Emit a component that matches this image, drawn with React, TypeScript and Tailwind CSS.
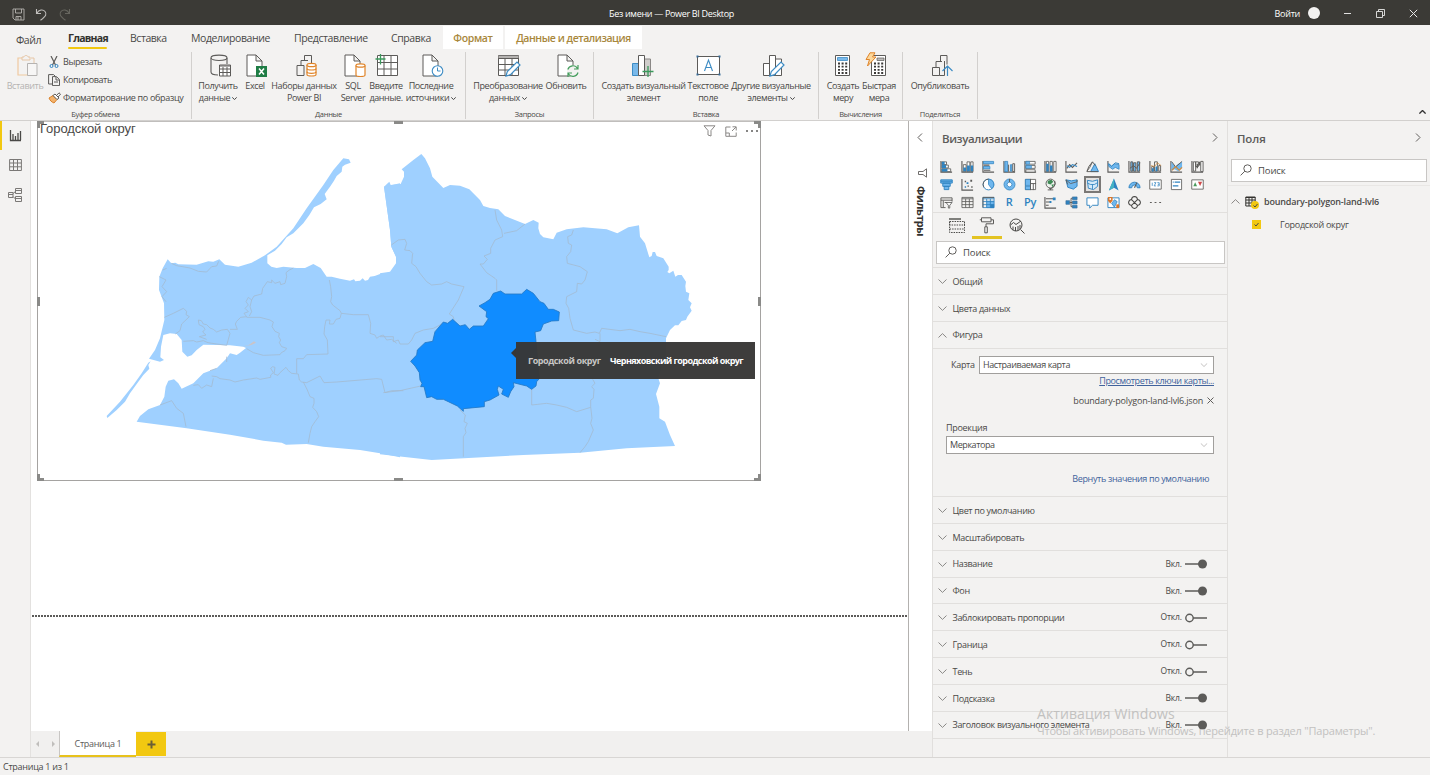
import React from "react";

type Kids = { children?: React.ReactNode };

const D = "#5c5b59";
const B = "#2f83c0";
const L = "#6fb7ee";

function Ico({ w = 24, h = 24, vb, className = "", children }: Kids & { w?: number; h?: number; vb?: string; className?: string }) {
  return (
    <svg width={w} height={h} viewBox={vb ?? `0 0 ${w} ${h}`} fill="none" className={`shrink-0 ${className}`}>
      {children}
    </svg>
  );
}

function Chevron({ up = false, w = 9, h = 5, color = "#8a8886", sw = 1 }: { up?: boolean; w?: number; h?: number; color?: string; sw?: number }) {
  return (
    <Ico w={w} h={h} vb="0 0 9 5">
      <path d={up ? "M.5 4.5L4.5.6l4 3.9" : "M.5.5l4 3.9 4-3.9"} stroke={color} strokeWidth={sw} />
    </Ico>
  );
}

/* ---------- Title bar ---------- */

function TitleBar() {
  return (
    <header className="relative flex h-[25px] shrink-0 items-center bg-[#3b3a36] text-white">
      <div className="flex items-center gap-[10px] pt-[3px] pl-[12px]">
        <Ico w={13} h={13}>
          <path d="M1 1h11v11H3L1 10zM3.500 1v4h6V1M4 12V8.500h5V12M6 9v3" stroke="#b5b3b0" strokeWidth=".9" />
        </Ico>
        <Ico w={13} h={13}>
          <path d="M1.500 1v4.500H6M1.800 5.200C4 1.500 8 1 10 3.500s1.200 4.500-4.500 8.800" stroke="#c0bebc" strokeWidth="1.100" />
        </Ico>
        <Ico w={13} h={13}>
          <path d="M11.500 1v4.500H7M11.200 5.200C9 1.500 5 1 3 3.500s-1.200 4.500 4.500 8.800" stroke="#67665f" strokeWidth="1.100" />
        </Ico>
      </div>
      <div className="ml-[538px] pt-[2px] text-[9px] tracking-[-0.32px] whitespace-nowrap">Без имени — Power BI Desktop</div>
      <div className="ml-auto flex items-center pt-px pr-[12px] text-[9px]">
        <span className="pt-px tracking-[-0.3px]">Войти</span>
        <span className="ml-[8px] h-[12px] w-[12px] rounded-full bg-[#f3f2f1]" />
        <Ico w={9} h={9} className="ml-[23px]">
          <path d="M1 4.500h7" stroke="#e0e0e0" />
        </Ico>
        <Ico w={9} h={9} className="ml-[24px]">
          <path d="M.5 2.500h6v6h-6zM2.500 2.500v-2h6v6h-2" stroke="#e8e8e8" strokeWidth=".9" />
        </Ico>
        <Ico w={9} h={9} className="ml-[24px]">
          <path d="M.8.8l7.400 7.400M8.200.8L.8 8.200" stroke="#e8e8e8" />
        </Ico>
      </div>
    </header>
  );
}

/* ---------- Ribbon ---------- */

function RibbonTabs() {
  return (
    <nav className="flex h-[23px] text-[10.5px] leading-[24px] whitespace-nowrap text-[#4a4947]">
      <span className="w-[68px] pt-[2px] pl-[16px] tracking-[-0.5px]">Файл</span>
      <span className="relative w-[62px] font-bold tracking-[-0.75px] text-[#33322f]">
        Главная
        <i className="absolute bottom-0 left-0 h-[2px] w-[39px] rounded bg-[#f2c811]" />
      </span>
      <span className="w-[61px] tracking-[-0.45px]">Вставка</span>
      <span className="w-[103px] tracking-[-0.4px]">Моделирование</span>
      <span className="w-[97px] tracking-[-0.4px]">Представление</span>
      <span className="w-[52px] tracking-[-0.4px]">Справка</span>
      <span className="mr-[2px] w-[60px] bg-white text-center font-semibold tracking-[-0.35px] text-[#a8873c]">Формат</span>
      <span className="w-[137px] bg-white text-center font-semibold tracking-[-0.45px] text-[#a8873c]">Данные и детализация</span>
    </nav>
  );
}

function Group({ label, width, children }: Kids & { label: string; width: string }) {
  return (
    <section className={`flex h-[67px] flex-col border-r border-[#d2d0ce] ${width}`}>
      <div className="flex h-[57px]">{children}</div>
      <div className="text-center text-[7.500px] leading-[10px] tracking-[-0.3px] whitespace-nowrap text-[#4a4947]">{label}</div>
    </section>
  );
}

function Big({ icon, l1, l2, width, drop = false, muted = false }: { icon: React.ReactNode; l1: string; l2?: string; width: string; drop?: boolean; muted?: boolean }) {
  return (
    <div className={`flex shrink-0 flex-col items-center text-[9px] leading-[12px] tracking-[-0.38px] whitespace-nowrap ${muted ? "text-[#b5b3b1]" : "text-[#4a4947]"} ${width}`}>
      <div className="flex h-[28px] items-start pt-[2px] pl-[5px]">{icon}</div>
      <div className="flex justify-center">{l1}</div>
      {l2 && (
        <div className="flex items-center justify-center gap-[2px]">
          {l2}
          {drop && <Chevron w={5} h={3} color="#444" sw={1.8} />}
        </div>
      )}
    </div>
  );
}

const page = "M1 1h9l6 6v15H1zM10 1v6h6";

const icons = {
  paste: (
    <Ico>
      <path d="M6 4H2v17h10" stroke="#f0c9a0" strokeWidth="1.200" />
      <path d="M15 4h3v5M6 3h2c0-2 4-2 4 0h2v3H6z" stroke="#e6c6a6" />
      <path d="M11.500 9.500H21v12h-9.500z" stroke="#b5b3b1" fill="#f7f6f5" />
    </Ico>
  ),
  getData: (
    <Ico>
      <path d="M2 4v14c0 2 3 3 7 3M18 4v6" stroke={D} strokeWidth="1.100" />
      <ellipse cx="10" cy="3.800" rx="8" ry="2.700" stroke={D} strokeWidth="1.100" />
      <path d="M10.500 11h11v11h-11z" fill="#fff" stroke={D} />
      <path d="M10.500 12h11M10.500 15h11M10.500 18.500h11M14 13v9M18 13v9" stroke={D} />
    </Ico>
  ),
  excel: (
    <Ico>
      <path d={page} stroke={D} fill="#fff" />
      <rect x="10" y="12" width="11" height="11" fill="#1f7d45" />
      <path d="M13 14.500l5 6M18 14.500l-5 6" stroke="#fff" strokeWidth="1.500" />
    </Ico>
  ),
  datasets: (
    <Ico>
      <path d="M2 11.500h7v10H2zM6 11V6.500h7M9.500 6V1.500h7v8" stroke={D} />
      <path d="M12 11v9.500c0 2 9 2 9 0V11" stroke="#e08428" fill="#fff" strokeWidth="1.200" />
      <ellipse cx="16.500" cy="11" rx="4.500" ry="1.700" stroke="#e08428" fill="#fff" strokeWidth="1.200" />
      <path d="M12 14.500c0 2 9 2 9 0M12 17.800c0 2 9 2 9 0" stroke="#e08428" strokeWidth="1.200" />
    </Ico>
  ),
  sql: (
    <Ico>
      <path d={page} stroke={D} fill="#fff" />
      <path d="M12 11.500v9.500c0 2 9 2 9 0v-9.500" stroke="#e08428" fill="#fff" strokeWidth="1.200" />
      <ellipse cx="16.500" cy="11.500" rx="4.500" ry="1.700" stroke="#e08428" fill="#fff" strokeWidth="1.200" />
    </Ico>
  ),
  enter: (
    <Ico className="-ml-[4px]">
      <path d="M2.500 1.500h20v20h-20z" stroke={D} fill="#fff" />
      <path d="M9 1.500v20M16 1.500v20M2.500 8.500h20M2.500 15h20" stroke={D} />
      <path d="M5.500 0v10.500M.5 5h10" stroke="#3a9a5c" strokeWidth="1.300" />
    </Ico>
  ),
  recent: (
    <Ico>
      <path d={page} stroke={D} fill="#fff" />
      <circle cx="15.500" cy="17" r="5.300" stroke="#3d8cc4" fill="#fff" strokeWidth="1.100" />
      <path d="M15.500 13.500V17h3" stroke="#3d8cc4" />
    </Ico>
  ),
  transform: (
    <Ico className="-ml-[4px]">
      <path d="M1.500 1.500h20v20h-20z" stroke={D} fill="#fff" />
      <path d="M1.500 3h20" stroke="#b5b3b1" strokeWidth="2.500" />
      <path d="M1.500 4.500h20M8 5v16M15 5v16M1.500 10.500h20M1.500 16h20" stroke={D} />
      <path d="M9 22l1.300-4.500L20 8l3 3-9.500 9.700z" stroke="#3d8cc4" fill="#fff" strokeWidth="1.200" />
    </Ico>
  ),
  refresh: (
    <Ico>
      <path d={page} stroke={D} fill="#fff" />
      <circle cx="16" cy="17" r="6" fill="#f3f2f1" />
      <path d="M10.800 15.500a5.300 5.300 0 019.700-1M21 11v4h-4M21 18.500a5.300 5.300 0 01-9.700 1.200M11 23v-4h4" stroke="#459e5d" strokeWidth="1.200" />
    </Ico>
  ),
  newVisual: (
    <Ico className="-ml-[6px]">
      <path d="M1.500 9.500h6v12h-6z" stroke="#3d8cc4" fill="#79b9ea" />
      <path d="M13.500 5h6v16.500h-6z" stroke="#8a8886" fill="#d0cecc" />
      <path d="M7.500 1.500h6v20h-6z" stroke={D} fill="#fff" />
      <path d="M17 12v11M11.500 17.500h11" stroke="#3a9a5c" strokeWidth="1.300" />
    </Ico>
  ),
  textBox: (
    <Ico w={25} className="-ml-[5px]">
      <path d="M1.500 2.500h22v18h-22z" stroke={D} fill="#fff" />
      <path d="M8.500 17l4-11 4 11M10 13.500h5" stroke="#3d8cc4" strokeWidth="1.100" />
      <path d="M.5 1.500h2v2h-2zM22.500 1.500h2v2h-2zM.5 19.500h2v2h-2zM22.500 19.500h2v2h-2z" fill="#3a6f9c" />
    </Ico>
  ),
  moreVisuals: (
    <Ico>
      <path d="M1.500 9.500h6v12h-6zM13.500 5h6v16.500h-6zM7.500 1.500h6v20h-6z" stroke={D} fill="#fff" />
      <path d="M8 22l1.300-4.500L19 8l3 3-9.500 9.700z" stroke="#3d8cc4" fill="#fff" strokeWidth="1.200" />
    </Ico>
  ),
  measure: (
    <Ico w={20} className="-ml-[3px]">
      <path d="M1.500 1.500h14v20h-14z" stroke={D} fill="#fff" />
      <path d="M3.500 3.500h10v3h-10z" fill="#79b9ea" stroke="#3d8cc4" strokeWidth=".8" />
      <path d="M4 9.500h10M4 12.700h10M4 15.900h10M4 19h10" stroke="#3a3937" strokeWidth="1.800" strokeDasharray="2 1.600" />
    </Ico>
  ),
  quick: (
    <Ico w={25} h={26} className="-mt-[2px] -ml-[8px]">
      <path d="M6.500 3.500h14v20h-14z" stroke={D} fill="#fff" />
      <path d="M12 6h7v2.500h-7z" fill="#bdbbb9" stroke={D} strokeWidth=".7" />
      <path d="M9 11.500h10M9 14.700h10M9 17.900h10M9 21h10" stroke="#3a3937" strokeWidth="1.800" strokeDasharray="2 1.600" />
      <path d="M5 .8h5L7.500 5H11L2.500 14l2-6.500H1z" stroke="#e08428" fill="#fbd79b" />
    </Ico>
  ),
  publish: (
    <Ico>
      <path d="M1.500 13.500h7v8h-7zM5 13V7.500h6M9.500 7V1.500h6.500v9M8.500 21.500h5M13.500 7v14.500" stroke={D} />
      <path d="M16.500 22V12.500M11.500 17l5-5 5 5" stroke="#3d8cc4" strokeWidth="1.200" />
    </Ico>
  ),
};

function ClipRow({ icon, children }: Kids & { icon: React.ReactNode }) {
  return (
    <div className="flex h-[18px] items-center text-[9px] whitespace-nowrap text-[#4a4947]">
      <span className="flex w-[15px]">{icon}</span>
      {children}
    </div>
  );
}

function Ribbon() {
  return (
    <div className="h-[96px] shrink-0 border-b border-[#d2d0ce] bg-[#f3f2f1] pt-px">
      <RibbonTabs />
      <div className="flex items-end">
        <div className="flex pt-[3px]">
          <Group label="Буфер обмена" width="w-[192px]">
            <div className="w-[48px] pl-[7px]">
              <Big icon={icons.paste} l1="Вставить" width="w-[36px]" muted />
            </div>
            <div className="pt-px">
              <ClipRow
                icon={
                  <Ico w={12} h={12}>
                    <path d="M3 0l4.500 9M9 0L4.500 9" stroke={D} strokeWidth="1.200" />
                    <circle cx="3.500" cy="10" r="1.500" stroke="#2f83c0" />
                    <circle cx="8.500" cy="10" r="1.500" stroke="#2f83c0" />
                  </Ico>
                }
              >
                <span className="tracking-[-0.4px]">Вырезать</span>
              </ClipRow>
              <ClipRow
                icon={
                  <Ico w={12} h={12}>
                    <path d="M4 10H.6V.6h5L7 2M4.500 2.600h4l3 3v6h-7zM8 3v3h3M6 8h4" stroke={D} />
                  </Ico>
                }
              >
                <span className="tracking-[-0.4px]">Копировать</span>
              </ClipRow>
              <ClipRow
                icon={
                  <Ico w={13} h={12}>
                    <path d="M1 6l4-2.500 4 4L6 11C3.500 10 2 8.500 1 6z" fill="#f3b26b" stroke="#d9822b" />
                    <path d="M5 3.500L7 2l4 4-2 1.500zM8.500 3.500L11 .8l1.500 1.400-2.500 2.800" stroke={D} fill="#fff" />
                  </Ico>
                }
              >
                <span className="tracking-[-0.33px]">Форматирование по образцу</span>
              </ClipRow>
            </div>
          </Group>
          <Group label="Данные" width="w-[274px] [&>div:first-child]:pl-[6px]">
            <Big icon={icons.getData} l1="Получить" l2="данные" drop width="w-[40px]" />
            <Big icon={icons.excel} l1="Excel" width="w-[34px]" />
            <Big icon={icons.datasets} l1="Наборы данных" l2="Power BI" width="w-[64px]" />
            <Big icon={icons.sql} l1="SQL" l2="Server" width="w-[34px]" />
            <Big icon={icons.enter} l1="Введите" l2="данные." width="w-[32px]" />
            <Big icon={icons.recent} l1="Последние" l2="источники" drop width="w-[58px]" />
          </Group>
          <Group label="Запросы" width="w-[128px] [&>div:first-child]:pl-[7px]">
            <Big icon={icons.transform} l1="Преобразование" l2="данных" drop width="w-[70px]" />
            <Big icon={icons.refresh} l1="Обновить" width="w-[46px]" />
          </Group>
          <Group label="Вставка" width="w-[225px] [&>div:first-child]:pl-[7px]">
            <Big icon={icons.newVisual} l1="Создать визуальный" l2="элемент" width="w-[85px]" />
            <Big icon={icons.textBox} l1="Текстовое" l2="поле" width="w-[44px]" />
            <Big icon={icons.moreVisuals} l1="Другие визуальные" l2="элементы" drop width="w-[82px]" />
          </Group>
          <Group label="Вычисления" width="w-[84px] [&>div:first-child]:pl-[7px]">
            <Big icon={icons.measure} l1="Создать" l2="меру" width="w-[34px]" />
            <Big icon={icons.quick} l1="Быстрая" l2="мера" width="w-[38px]" />
          </Group>
          <Group label="Поделиться" width="w-[75px] [&>div:first-child]:pl-[7px]">
            <Big icon={icons.publish} l1="Опубликовать" width="w-[60px]" />
          </Group>
        </div>
        <div className="mr-[4px] mb-[5px] ml-auto">
          <Chevron up w={7} h={4} color="#333" sw={1.8} />
        </div>
      </div>
    </div>
  );
}

/* ---------- Canvas ---------- */

function LeftRail() {
  return (
    <aside className="relative flex w-[31px] shrink-0 flex-col items-center gap-[16px] border-r border-[#e3e1df] bg-[#f3f2f1] pt-[7px]">
      <i className="absolute top-0 left-0 h-[29px] w-[2px] bg-[#f2c811]" />
      <Ico w={13} h={14}>
        <path d="M1.500 2v10.500H12M4 12V6M6.500 12V8M9 12V5M11.500 12V3" stroke="#4a4947" strokeWidth="1.300" />
      </Ico>
      <Ico w={13} h={14}>
        <path d="M.6 1.500h11.800v11H.6zM.6 5h11.800M.6 8.800h11.800M4.500 1.500v11M8.500 1.500v11" stroke="#7a7876" />
      </Ico>
      <Ico w={14} h={14}>
        <path d="M7.500.5h6v5h-6zM7.500 8.500h6v5h-6zM.5 4.500h4.500v5H.5zM7.500 2.500h6M7.500 10.500h6M.5 6.500H5M5 5.500l2.500-2M5 8.500l2.500 2.500" stroke="#7a7876" />
      </Ico>
    </aside>
  );
}

function RegionMap() {
  return (
    <svg viewBox="24 6 2169 1074" className="absolute inset-0 h-[358px] w-[723px]" fill="none" strokeLinejoin="round">
      <g fill="#9fd0ff">
        <path d="M413 418L424 430L436 428L445 433L500 434L535 424L550 425L568 418L585 434L625 440L665 428L705 406L740 380L790 325L830 265L880 195L910 150L940 115L957 118L962 128L945 134L937 140L935 155L920 168L912 182L900 200L884 222L890 238L872 252L852 262L838 285L820 310L790 340L770 352L755 372L735 392L712 406L712 430L724 440L740 444L760 440L800 444L825 444L850 432L872 444L890 470L905 470L930 476L960 482L972 478L976 484L990 482L998 475L1005 482L1014 480L1020 470L1034 468L1050 462L1080 458L1098 440L1100 415L1084 380L1080 330L1062 200L1110 190L1110 1012L1050 1000L990 990L880 980L830 972L768 974L755 968L700 962L600 944L470 925L320 905L330 888L355 868L390 855L403 830L407 800L415 782L432 778L445 790L455 806L490 790L520 760L560 745L590 715L600 700L620 705L630 698L648 684L640 680L600 676L520 674L500 690L485 706L472 710L457 695L455 660L440 642L420 640L400 645L393 680L391 712L402 720L390 725L357 716L375 690L390 655L403 600L402 550L387 510L388 470L398 445Z" />
        <path d="M362 724L355 735L358 746L340 765L325 785L300 820L285 845L260 870L232 894L230 888L270 845L310 795L335 760L355 728Z" />
        <path transform="translate(1050)" d="M12 200L28 185L32 195L62 192L72 170L72 155L65 148L100 120L124 102L135 115L150 145L157 170L190 204L210 195L240 197L268 208L300 240L310 258L330 264L355 268L375 288L435 312L460 300L476 308L475 325L480 342L490 352L520 358L530 338L560 328L610 322L680 328L712 340L745 322L777 316L780 350L795 370L808 412L815 408L818 396L825 396L830 408L850 415L866 440L866 450L862 456L868 460L880 452L886 470L894 465L905 465L918 485L916 498L918 515L928 520L925 540L935 550L930 562L935 572L922 590L918 600L905 603L895 616L885 616L870 630L858 655L858 700L835 775L840 790L828 822L838 860L838 895L855 905L870 945L885 978L740 985L600 998L430 1005L155 1020L0 1003L0 460L30 455L48 430L48 410L34 380L30 330Z" />
      </g>
      <path d="M655 676L672 664L678 668L664 675L628 682" fill="#c9c4c8" />
      <g stroke="#a3bacf" strokeWidth="2.300">
        <path d="M424 430L440 437L480 444L505 454L530 456L545 440L560 438L566 424M398 450L410 445M388 470L408 480L396 500L410 515L396 530L408 545M403 592L430 580L460 565L470 574L468 584L478 590L455 612L450 632L436 642M460 664L490 662L500 666L520 662L534 668L560 672L590 676L600 640L592 628L575 630L560 636L550 628L540 624L530 614L520 612L514 602L505 600L507 614L520 620L525 628L518 636L528 645L508 650L530 658M600 628L622 628L616 612L620 604L632 592L650 590L642 580L655 575L645 565L655 555L648 545L655 532L665 540L660 560L665 575L658 588M665 540L672 528L695 522L698 505L705 495L712 485L725 488L725 480L735 490L750 485L752 494L765 490L770 470L768 458L778 450L790 444M650 592L690 592L720 600L730 606L726 620L735 634L748 640L746 650L752 660L748 668L755 680L770 685L765 692L754 698L750 704L700 706L670 698L650 686M590 710L590 726M560 745L540 752M545 768L560 770L570 776L600 780L615 786L640 780L680 774L690 778L722 772L722 765L730 758L722 745L728 740L735 742L732 762L744 766L750 758L768 742L775 752L785 760L805 762L808 780L815 786L830 788M830 788L870 768L882 788L920 786L1040 776L1055 778L1065 818L1085 812L1120 812M800 760L800 716L820 716L830 704L894 702L892 660L882 642L884 620L888 600L900 600L898 612L910 612L918 598L930 595L934 580L930 572L908 555L902 545L905 530L902 500L898 480M934 580L970 584L1015 584L1022 610L1020 640L1035 645L1040 655L1050 648L1060 645L1070 660L1085 658L1100 670M820 786L832 810L840 830L852 835L852 850L848 862L860 875L866 890L855 905L845 920L840 940L835 968M490 796L505 794L515 805L530 795L545 800L550 775M390 855L425 842L440 865L460 880L468 920" />
        <path transform="translate(1050)" d="M34 375L55 360L75 358L80 370L74 390L90 392L98 400L95 430L108 440L120 460L140 485L155 495L185 492L200 485L215 492L252 500L235 540L208 582L220 590L222 600M190 610L160 625L130 630L105 640L95 660L85 672L60 672L55 660L40 665L40 650L0 650M10 818L60 812L122 798M345 270L350 300L365 330L368 350L345 360L332 385L332 400L312 408L322 418L310 432L300 432L320 458L345 475L350 480L350 512M372 340L410 332L435 312M580 330L575 345L563 350L565 370L575 375L572 395L560 410L562 430L600 440L622 455L615 480L605 492L592 490L590 515L560 530L558 550L566 565L570 595L580 630L620 640L645 636L658 640L665 625L720 632L750 628L780 635L810 640L858 650M645 658L660 665L660 640M638 778L645 790L635 800L642 808L640 835L632 840L632 860L636 895L632 910L640 930L625 965L615 980L600 998M455 808L455 855L500 850L530 855L560 862L590 875L632 862M240 870L256 885L252 905L262 910L255 925L258 938L250 950L250 1010" />
      </g>
      <path
        transform="translate(1050)"
        fill="#108cff"
        stroke="#2478c4"
        strokeWidth="2.500"
        d="M297 558L315 548L330 538L340 520L362 513L375 522L425 522L440 508L460 520L480 545L492 550L505 568L520 568L538 576L536 602L515 603L490 612L482 632L465 636L468 665L478 776L470 785L468 798L455 808L440 798L400 788L402 800L392 815L385 832L365 822L370 808L355 798L352 808L357 825L330 840L313 845L313 860L250 866L250 874L232 858L205 845L190 838L170 838L155 830L140 833L132 800L122 800L126 790L120 780L118 758L105 738L92 724L110 705L112 690L135 668L158 664L165 635L190 606L203 610L218 598L240 618L256 614L268 628L280 618L310 618L325 596L318 590L320 575Z"
      />
    </svg>
  );
}

function Handles() {
  return (
    <>
      <i className="absolute -top-px -left-px h-[7px] w-[7px] border-t-3 border-l-3 border-[#8a8a88]" />
      <i className="absolute -top-px -right-px h-[7px] w-[7px] border-t-3 border-r-3 border-[#8a8a88]" />
      <i className="absolute -bottom-px -left-px h-[7px] w-[7px] border-b-3 border-l-3 border-[#8a8a88]" />
      <i className="absolute -right-px -bottom-px h-[7px] w-[7px] border-r-3 border-b-3 border-[#8a8a88]" />
      <i className="absolute -top-px left-[356px] h-[3px] w-[9px] bg-[#8a8a88]" />
      <i className="absolute -bottom-px left-[356px] h-[3px] w-[9px] bg-[#8a8a88]" />
      <i className="absolute top-[175px] -left-px h-[9px] w-[3px] bg-[#8a8a88]" />
      <i className="absolute top-[175px] -right-px h-[9px] w-[3px] bg-[#8a8a88]" />
    </>
  );
}

function Canvas() {
  return (
    <main className="flex min-w-0 flex-1 flex-col">
      <div className="flex h-[610px] bg-white">
        <div className="w-[877px] pl-[6px]">
          <div className="relative h-[360px] w-[724px] border border-[#a5a3a1] border-t-[#c0bebc]">
            <RegionMap />
            <Handles />
            <div className="relative flex items-start justify-between">
              <h2 className="pl-[2px] font-['Liberation_Sans',sans-serif] text-[13px] leading-[14px] tracking-[-0.08px] text-[#4a4947]">Городской округ</h2>
              <div className="flex items-center gap-[9px] pt-[3px] pr-[2px]">
                <Ico w={13} h={12}>
                  <path d="M1 .8h11L8 5.500V11L5 10V5.500z" stroke="#8a8886" />
                </Ico>
                <Ico w={12} h={11}>
                  <path d="M5.500 1H.8v9.300h10.400V6.500M7.500.8h3.700v3.700M11 1L7 5M.8 7h3.500v3" stroke="#8a8886" />
                </Ico>
                <Ico w={12} h={4}>
                  <path d="M0 2h2M5 2h2M10 2h2" stroke="#5f5e5c" strokeWidth="1.600" />
                </Ico>
              </div>
            </div>
            <div className="absolute top-[220px] left-[478px] flex h-[37px] w-[239px] items-center bg-[#383736]/97 pt-px pl-[12px] text-[9px] font-bold whitespace-nowrap">
              <i className="absolute top-[6px] -left-[5px] border-y-[5px] border-r-[5px] border-y-transparent border-r-[#383736]" />
              <span className="w-[82px] tracking-[-0.4px] text-[#c8c6c4]">Городской округ</span>
              <span className="tracking-[-0.56px] text-white">Черняховский городской округ</span>
            </div>
          </div>
          <div className="mt-[134px] -ml-[5px] h-[2px] w-[875px] bg-[repeating-linear-gradient(90deg,#5c5b59_0_2px,#fff_2px_3px)]" />
        </div>
        <div className="flex flex-1 flex-col items-center border-l border-[#b3b1af] pt-[12px]">
          <Ico w={6} h={9} className="mr-px">
            <path d="M5 .5l-4 4 4 4" stroke="#605e5c" />
          </Ico>
          <Ico w={11} h={10} className="mt-[26px] ml-[3px]">
            <path d="M9.500.800v8.400L6 6.500H1.500v-3H6z" stroke="#605e5c" strokeWidth=".9" />
          </Ico>
          <div className="mt-[8px] text-[11px] leading-[14px] font-bold tracking-[-0.5px] text-[#33322f] [writing-mode:vertical-rl]">Фильтры</div>
        </div>
      </div>
      <div className="flex h-[26px] bg-[#f1f0ef]">
        <div className="flex w-[28px] items-center justify-center gap-[13px]">
          <i className="border-y-[3px] border-r-[3px] border-y-transparent border-r-[#c0bebc]" />
          <i className="border-y-[3px] border-l-[3px] border-y-transparent border-l-[#c0bebc]" />
        </div>
        <div className="flex h-[26px] w-[77px] items-center justify-center border-b-2 border-l border-b-[#e8c21c] border-l-[#c8c6c4] bg-white pt-[2px] text-[9px] tracking-[-0.3px] text-[#5c5b59]">Страница 1</div>
        <div className="mt-px flex h-[24px] w-[30px] items-center justify-center bg-[#f2c811]">
          <Ico w={9} h={9}>
            <path d="M4.500.5v8M.5 4.500h8" stroke="#6b5f36" strokeWidth="2" />
          </Ico>
        </div>
      </div>
    </main>
  );
}

/* ---------- Visualizations pane ---------- */

const axis = <path d="M1 1v12h12" stroke={D} strokeWidth="1.200" />;

const vizIcons: React.ReactNode[] = [
  <>{axis}<path d="M2 2h5v3H2zM2 5.500h7v3H2zM2 9.500h9.500v3H2z" fill="#fff" stroke={D} strokeWidth=".9" /><path d="M2 2h3v3H2zM2 5.500h4.500v3H2zM2 9.500h6v3H2z" fill={B} /></>,
  <>{axis}<path d="M2.500 5h3v7.500h-3zM6.500 2h3v10.500h-3zM10.500 2h2.500v10.500h-2.500z" fill="#fff" stroke={D} strokeWidth=".9" /><path d="M2.500 8h3v4h-3zM6.500 6h3v6h-3zM10.500 6h2.500v6h-2.500z" fill={B} /></>,
  <>{axis}<path d="M1.500 1.500h11v2.500h-11zM1.500 7h7v2.500h-7z" fill={L} stroke={B} strokeWidth=".8" /><path d="M2 5.500h6M2 11h7" stroke={D} strokeWidth="1.200" /></>,
  <>{axis}<path d="M2 1.500h3v11H2zM8 5h1.500v7H8z" fill={L} stroke={B} strokeWidth=".8" /><path d="M6 5v7.500M10.500 4h2v8.500h-2z" stroke={D} /></>,
  <>{axis}<path d="M2 1.500h10v3H2zM2 6h10v3H2zM2 10.500h10v2.500H2z" stroke={D} strokeWidth=".9" fill="#fff" /><path d="M2 1.500h4v3H2zM2 6h6v3H2z" fill={L} stroke={B} strokeWidth=".6" /></>,
  <>{axis}<path d="M2.500 1.500h2.500v11h-2.500zM6.500 1.500h2.500v11h-2.500zM10.500 1.500h2.500v11h-2.500z" stroke={D} strokeWidth=".9" fill="#fff" /><path d="M2.500 4h2.500v8.500h-2.500zM6.500 6h2.500v6.500h-2.500z" fill={B} /></>,
  <>{axis}<path d="M2 9l3-4 3 3 5-5" stroke={D} strokeWidth="1.100" /><path d="M2 6l3 2 3-3 5 2" stroke={B} strokeWidth="1.100" /></>,
  <><path d="M5 12.500L9.500 4l4 8.500z" fill={L} stroke={B} /><path d="M1 12.500L3 7l4-5 3 4M1 12.500h12M7 2L4 8l-3 4" stroke={D} /></>,
  <>{axis}<path d="M1.500 4l3.500 3 3-3 5 1v5l-4-2-3 2-4-3z" fill={L} stroke={B} strokeWidth=".8" /><path d="M2 4l3 2.500L9 3l4 1" stroke={B} /></>,
  <>{axis}<path d="M3 2h2v10H3zM6 3h2.500v9H6zM10 2h2.500v10H10z" fill={L} stroke={D} /><path d="M2 9l4-3 3 3 4-6" stroke={D} /></>,
  <>{axis}<path d="M3 7h2v5H3zM6 2h3v10H6zM10.500 6h2v6h-2z" fill="#fff" stroke={D} /><path d="M3 9h2v3.500H3zM7 7h2v5H7z" fill={B} /><path d="M2 6l4 1 3-4 4 3" stroke="#d08a3c" strokeWidth=".8" /></>,
  <>{axis}<path d="M1.500 2l4 5 3.500-3 4-2v6l-4 4-4-2-3.500 1z" fill={L} /><path d="M2 2l4 5.500L13 1.500" stroke={D} /><path d="M2 11l4-4 4 4 3-3" stroke="#d08a3c" strokeWidth="1.300" /></>,
  <>{axis}<path d="M2.500 2h2.500v10H2.500zM10.500 1.500h2.500v11h-2.500zM5 2h3v5H5z" fill="#fff" stroke={D} /><path d="M6 4h1.500v5H6zM8.500 2h1.500v4H8.500z" fill={D} /></>,
  <><path d="M.8 2h12.400v3.500H.8zM3 5.500h8V9H3zM4.500 9h5v3.500h-5z" fill={L} stroke={B} /><path d="M1 3.500h12" stroke={B} /></>,
  <>{axis}<path d="M4 3h1.500v1.500H4zM10 2h2v2h-2zM7 8h1.500v1.500H7zM11 9h1.500v1.500H11z" fill={D} /><path d="M6 4.500h2v2H6zM4 9h1.500v1.500H4z" fill={B} /></>,
  <><circle cx="7" cy="7" r="5.800" fill="#fff" stroke={B} /><path d="M7 1.200V7l3.500 4.600A5.800 5.800 0 007 1.200z" fill={L} stroke={B} strokeWidth=".8" /><path d="M7 1.200A5.800 5.800 0 002 10" stroke={D} /></>,
  <><circle cx="7" cy="7" r="4.300" stroke={L} strokeWidth="3" /><circle cx="7" cy="7" r="5.900" stroke={B} strokeWidth=".9" /><circle cx="7" cy="7" r="2.600" fill="#fff" stroke={B} strokeWidth=".9" /><path d="M7 1v3.500" stroke={D} /></>,
  <><path d="M1.500 1.500h11v11h-11z" fill="#fff" stroke={D} strokeWidth=".9" /><path d="M1.500 1.500H7v6.500H1.500zM1.500 9H7v3.500H1.500z" fill={L} stroke={B} strokeWidth=".8" /><path d="M7 1v12M7 6h6M10 6v7" stroke={D} /></>,
  <><circle cx="7" cy="6" r="4.800" fill="#eef3ee" stroke={D} /><path d="M4 3l4-1 2 2-3 3-3-1zM8 7h3l-2 3z" fill="#3d8a55" /><path d="M4 12.800h6M7 11v2M11.500 3a6 6 0 01-6 8.500" stroke={D} /></>,
  <><path d="M1 2l6 1 6-1v7l-4 3-6-2z" fill={L} stroke={B} /><path d="M1 2l5 4 7-2V2M1 2l2 5" stroke={D} strokeWidth=".9" /></>,
  <><path d="M1.500 2.500l5.500 1L12.500 2v7L8 12.500 2.500 11z" fill="#d4eaf9" stroke={B} /><path d="M1.500 5.500L5 7h4l3.500-2M7 7v5" stroke={B} strokeWidth=".9" /></>,
  <><path d="M7.500.5L12.500 13.500l-5-3-5.500 3z" fill={B} /><path d="M7.500.5v10L2 13.500z" fill="#45b3c4" /></>,
  <><path d="M1 10.500a6 6 0 0112 0h-3a3 3 0 00-6 0z" fill={L} stroke={B} /><path d="M7 10.500L9.500 5" stroke={D} strokeWidth="1.200" /></>,
  <><path d="M.8 2h12.400v10H.8z" fill="#fff" stroke={D} strokeWidth=".9" /><path d="M3.500 5v3.500M5.500 5h2L5.500 8.500h2M9 5h2v3.500H9M9.500 6.800H11" stroke={B} strokeWidth=".8" /></>,
  <><path d="M1.500 1.500h11v11h-11z" fill="#fff" stroke={D} strokeWidth=".9" /><path d="M3 4.500h1M5 4.500h6M3 8.500h6" stroke={B} strokeWidth="1.400" /></>,
  <><path d="M.8 2h12.400v10H.8z" fill="#fff" stroke={D} strokeWidth=".9" /><path d="M2.500 9l2-4.500 2 4.500z" fill="#4a9a5c" /><path d="M7.500 4h4.500l-2.200 4.500z" fill="#cf4a4a" /></>,
  <><path d="M1 2h12M1 2v10.500h5M13 2v4M1 4.500h12M3.500 5v7M5 7h3" stroke={D} /><path d="M6.500 7H13l-2.500 3v3H9v-3z" fill="#fff" stroke={D} strokeWidth=".9" /></>,
  <path d="M1 1.500h12v11H1zM1 3h12M1 6h12M1 9.300h12M5 3v9.500M9 3v9.500" stroke={D} strokeWidth=".9" />,
  <><path d="M5 5h8v8H5z" fill={L} /><path d="M9 9h4v4H9z" fill={B} /><path d="M1 1.500h12v11H1zM1 3h12M1 6h12M1 9.300h12M5 3v9.500M9 3v9.500" stroke={B} strokeWidth=".9" /><path d="M1 12.500v-11h12" stroke={D} /></>,
  "R",
  "Py",
  <>{axis}<path d="M2 3h8M2 6.500h5M2 10h3" stroke={D} strokeWidth="1.100" /><path d="M9.500 1.500h3v3h-3zM6 5.500h2v2H6z" fill={B} /></>,
  <><path d="M1 5h4v4H1zM8 1h5v3H8zM8 5.500h5v3H8zM8 10h5v3H8z" fill={B} stroke="#3a6f9c" strokeWidth=".7" /><path d="M5 7h3M6.500 2.500v9M6.500 2.500H8M6.500 11.500H8" stroke={D} /></>,
  <path d="M1 2h12v8H7l-3 3v-3H1z" fill="#fff" stroke={B} />,
  <><path d="M1 2h12v10.500H1z" fill="#fff" stroke={B} /><path d="M5 8l3-4 3 2-3 6z" fill={L} stroke={B} strokeWidth=".8" /><path d="M1 1h5v4L3.500 8 1 5z" fill="#d9762b" /><path d="M10 9h3v4h-3z" fill="#d9762b" /><circle cx="3.500" cy="3.200" r="1" fill="#fff" /></>,
  <path d="M7 .6Q10 1 10.200 3.800 13 4 13.400 7 13 10 10.200 10.200 10 13 7 13.400 4 13 3.800 10.200 1 10 .6 7 1 4 3.800 3.800 4 1 7 .6zM3.800 3.800l6.400 6.400M10.200 3.800l-6.400 6.400" stroke="#4a4947" strokeWidth="1.100" />,
  <path d="M1 7h2M6 7h2M11 7h2" stroke="#605e5c" strokeWidth="1.200" />,
];

function VizGrid() {
  return (
    <div className="mb-px grid grid-cols-[repeat(13,20.900px)] grid-rows-[repeat(3,18px)] pl-[3px]">
      {vizIcons.map((ic, i) => (
        <div key={i} className="flex items-center justify-center">
          {typeof ic === "string" ? (
            <b className="pb-px text-[11px] leading-[14px] font-semibold tracking-[-0.4px] text-[#2f83c0]">{ic}</b>
          ) : (
            <div className={i === 20 ? "-my-px flex h-[17px] w-[17px] items-center justify-center border-2 border-[#7a7876] bg-[#e4e2e0]" : "flex"}>
              <Ico w={13} h={13} vb="0 0 14 14">
                {ic}
              </Ico>
            </div>
          )}
        </div>
      ))}
    </div>
  );
}

function SearchBox({ className = "" }: { className?: string }) {
  return (
    <div className={`flex items-center border border-[#c8c6c4] bg-white pl-[8px] text-[9.5px] text-[#4a4947] ${className}`}>
      <Ico w={12} h={12} className="-mt-px">
        <circle cx="7.500" cy="4.500" r="3.700" stroke="#605e5c" />
        <path d="M4.800 7.200L.6 11.400" stroke="#605e5c" />
      </Ico>
      <span className="mt-[2px] ml-[6px] tracking-[-0.1px]">Поиск</span>
    </div>
  );
}

function Toggle({ on }: { on: boolean }) {
  return (
    <span className="flex items-center text-[8.5px]">
      <span className="mr-[3px] tracking-[-0.1px]">{on ? "Вкл." : "Откл."}</span>
      <Ico w={22} h={10}>
        {on ? (
          <>
            <path d="M0 5h14" stroke="#5c5b59" strokeWidth="1.500" />
            <circle cx="17.500" cy="5" r="4.500" fill="#5c5b59" />
          </>
        ) : (
          <>
            <path d="M8 5h14" stroke="#5c5b59" strokeWidth="1.500" />
            <circle cx="4.500" cy="5" r="3.700" stroke="#5c5b59" strokeWidth="1.400" />
          </>
        )}
      </Ico>
    </span>
  );
}

function Row({ label, open = false, toggle }: { label: string; open?: boolean; toggle?: boolean }) {
  return (
    <div className="flex h-[26.85px] items-center border-t border-[#e1dfdd] pt-px pr-[20px] pl-[5px] text-[9px] text-[#4a4947]">
      <Chevron up={open} />
      <span className="mr-auto ml-[5.500px] tracking-[-0.33px] whitespace-nowrap">{label}</span>
      {toggle !== undefined && <Toggle on={toggle} />}
    </div>
  );
}

function Select({ children, className = "" }: Kids & { className?: string }) {
  return (
    <div className={`flex h-[18px] items-center justify-between border border-[#a19f9d] bg-white pr-[5px] pl-[3px] text-[9px] tracking-[-0.42px] ${className}`}>
      <span className="pt-px">{children}</span>
      <Chevron w={8} h={4} color="#b5b3b1" />
    </div>
  );
}

function VizPane() {
  return (
    <aside className="flex w-[296px] shrink-0 flex-col border-x border-[#e1dfdd] bg-[#f3f2f1]">
      <div className="flex h-[36px] items-center justify-between pr-[9px] pl-[9px]">
        <h3 className="text-[11.5px] font-semibold tracking-[-0.38px] text-[#5c5b59]">Визуализации</h3>
        <Ico w={6} h={9} className="-mt-[4px]">
          <path d="M1 .5l4 4-4 4" stroke="#605e5c" />
        </Ico>
      </div>
      <VizGrid />
      <div className="flex h-[28px] border-t border-[#e1dfdd] pl-[9px]">
        <div className="flex w-[30px] justify-center pt-[5px]">
          <Ico w={16} h={16}>
            <path d="M0 1h12" stroke="#33322f" strokeWidth="1.200" />
            <path d="M.6 3.500h15v3.500H.6zM.6 11h15M.6 3.500v11h15v-11" stroke="#4a4947" strokeDasharray="1.500 1" />
          </Ico>
        </div>
        <div className="mb-px flex w-[30px] justify-center border-b-[3px] border-[#e3c322] pt-[4px]">
          <Ico w={16} h={17}>
            <path d="M2.500.8h9.500v4H2.500zM.8 2.800h1.700M12 2.800h2.500v4H7v3M5.800 9.800h2.500v6H5.800z" stroke="#5c5b59" />
          </Ico>
        </div>
        <div className="flex w-[30px] justify-center pt-[5px]">
          <Ico w={16} h={16}>
            <circle cx="7" cy="7" r="6" stroke="#4a4947" />
            <path d="M11.500 11.500L15.500 15.500M1.500 7l3-2.500 2.500 2 5-3.500M4 12V8.500M6.500 13V9M9 12.500V8M11 11V7" stroke="#4a4947" />
          </Ico>
        </div>
      </div>
      <SearchBox className="mx-[3px] mt-px mr-[2px] h-[23px]" />
      <div className="mt-[3px] flex flex-col border-b border-[#e1dfdd]">
        <Row label="Общий" />
        <Row label="Цвета данных" />
        <Row label="Фигура" open />
        <div className="flex h-[148.5px] flex-col border-t border-[#e1dfdd] pt-[7px] pr-[13px] pl-[12px] text-[9px] text-[#4a4947]">
          <div className="flex items-center">
            <span className="w-[34px] pl-[6px] tracking-[-0.3px]">Карта</span>
            <Select className="flex-1">Настраиваемая карта</Select>
          </div>
          <a className="self-end text-[9px] leading-[14px] tracking-[-0.38px] text-[#40629c] underline">Просмотреть ключи карты...</a>
          <div className="mt-[6px] flex items-center gap-[4px] self-end leading-[13px] tracking-[-0.18px]">
            boundary-polygon-land-lvl6.json
            <Ico w={7} h={7}>
              <path d="M.5.5l6 6M6.500.5l-6 6" stroke="#605e5c" />
            </Ico>
          </div>
          <span className="mt-[14px] mb-[2px] pl-px leading-[13px] tracking-[-0.3px]">Проекция</span>
          <Select className="ml-px">Меркатора</Select>
          <a className="mt-[18px] mr-[5px] self-end leading-[13px] tracking-[-0.36px] text-[#40629c]">Вернуть значения по умолчанию</a>
        </div>
        <Row label="Цвет по умолчанию" />
        <Row label="Масштабировать" />
        <Row label="Название" toggle />
        <Row label="Фон" toggle />
        <Row label="Заблокировать пропорции" toggle={false} />
        <Row label="Граница" toggle={false} />
        <Row label="Тень" toggle={false} />
        <Row label="Подсказка" toggle />
        <Row label="Заголовок визуального элемента" toggle />
      </div>
    </aside>
  );
}

/* ---------- Fields pane ---------- */

function FieldsPane() {
  return (
    <aside className="flex w-[202px] shrink-0 flex-col bg-[#f3f2f1] text-[#4a4947]">
      <div className="flex h-[36px] items-center justify-between pr-[9px] pl-[9px]">
        <h3 className="text-[11.5px] font-semibold tracking-[-0.1px] text-[#5c5b59]">Поля</h3>
        <Ico w={6} h={9} className="-mt-[4px]">
          <path d="M1 .5l4 4-4 4" stroke="#605e5c" />
        </Ico>
      </div>
      <SearchBox className="mt-[2px] mr-[3px] ml-[3px] h-[23px]" />
      <div className="mt-[3px] border-t border-[#e9e7e5] pt-[4px] pl-[3px] text-[9px]">
        <div className="flex h-[23px] items-center">
          <Chevron up />
          <span className="relative ml-[5px] flex">
            <Ico w={11} h={11}>
              <path d="M.8 1h9.400v9H.8zM.8 4h9.400M.8 7h9.400M4 1v9M7 1v9M.8 1.500h9.400" stroke="#33322f" />
            </Ico>
            <i className="absolute top-[5px] left-[6px] flex h-[8px] w-[8px] items-center justify-center rounded-full bg-[#f2c811]">
              <Ico w={5} h={5}>
                <path d="M.5 2.500L2 4l2.500-3" stroke="#4a4947" />
              </Ico>
            </i>
          </span>
          <span className="ml-[8px] font-semibold tracking-[-0.17px]">boundary-polygon-land-lvl6</span>
        </div>
        <div className="flex h-[23px] items-center">
          <span className="ml-[21px] flex h-[9px] w-[9px] items-center justify-center bg-[#f2c811]">
            <Ico w={5} h={5}>
              <path d="M.5 2.500L2 4l2.500-3" stroke="#4a4947" />
            </Ico>
          </span>
          <span className="ml-[19px] tracking-[-0.27px]">Городской округ</span>
        </div>
      </div>
    </aside>
  );
}

export default function App() {
  return (
    <div className="relative flex h-[775px] w-[1430px] flex-col overflow-hidden bg-[#f3f2f1] font-['Open_Sans','Noto_Sans',sans-serif]">
      <TitleBar />
      <Ribbon />
      <div className="flex h-[636px] shrink-0">
        <LeftRail />
        <Canvas />
        <VizPane />
        <FieldsPane />
      </div>
      <footer className="flex flex-1 items-center border-t border-[#d8d6d4] pl-[3px] text-[9px] tracking-[-0.28px] text-[#4a4947]">Страница 1 из 1</footer>
      <div className="absolute top-[705px] left-[1037px] whitespace-nowrap text-[#c2c1c0]">
        <div className="text-[14px] leading-[18px] tracking-[0.1px]">Активация Windows</div>
        <div className="text-[11px] leading-[16px] tracking-[-0.2px]">Чтобы активировать Windows, перейдите в раздел "Параметры".</div>
      </div>
    </div>
  );
}
